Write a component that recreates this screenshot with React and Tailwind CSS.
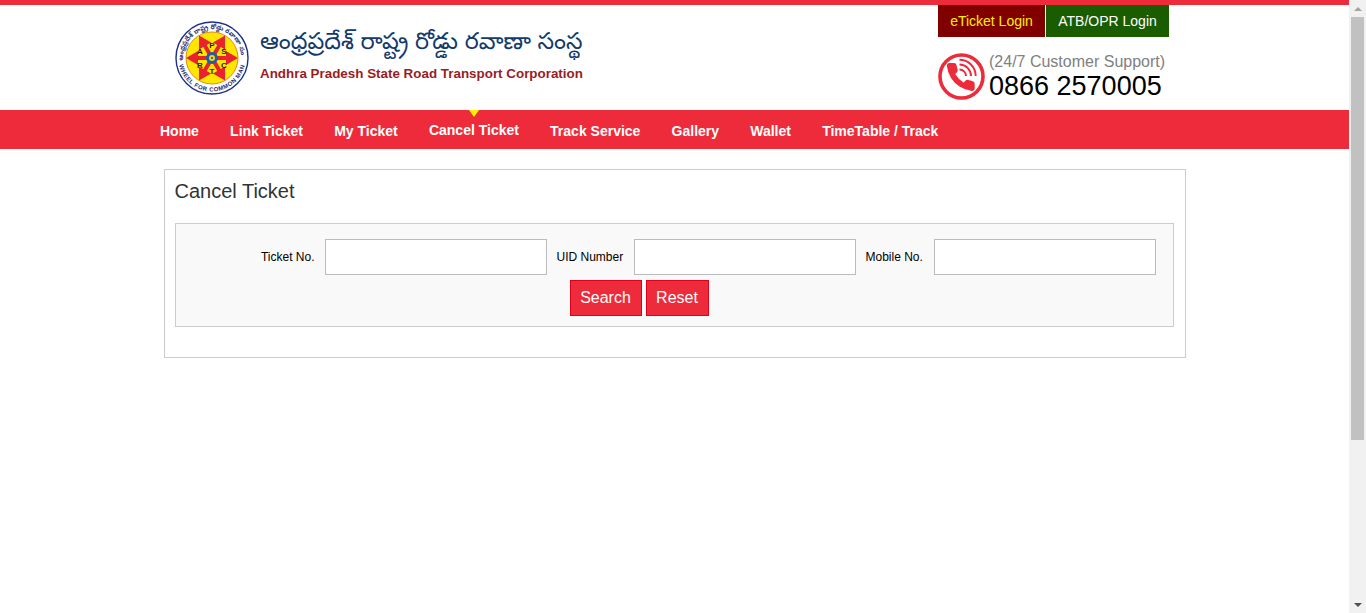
const NAV_ITEMS = ['Home', 'Link Ticket', 'My Ticket', 'Cancel Ticket', 'Track Service', 'Gallery', 'Wallet', 'TimeTable / Track'];
const SPOKES = [0, 60, 120, 180, 240, 300];
const LETTERS = [
  { ch: 'A', x: 25, y: 31 },
  { ch: 'P', x: 37, y: 25.500 },
  { ch: 'S', x: 49, y: 31 },
  { ch: 'R', x: 25, y: 45 },
  { ch: 'T', x: 37, y: 51 },
  { ch: 'C', x: 49, y: 45 },
];

function Logo() {
  return (
    <svg width="74" height="76" viewBox="0 0 74 76" className="shrink-0">
      <defs>
        <path id="ringTop" d="M8 38a29 29 0 0 1 58 0" />
        <path id="ringBottom" d="M3.500 38a33.500 33.500 0 0 0 67 0" />
      </defs>
      <circle cx="37" cy="38" r="36" fill="#fff" stroke="#1c2f86" strokeWidth="1.400" />
      <text fontSize="6.500" fontWeight="700" fill="#23307a" fontFamily="'Noto Sans Telugu', 'Noto Sans', sans-serif" textAnchor="middle">
        <textPath href="#ringTop" startOffset="50%">ఆంధ్రప్రదేశ్ రాష్ట్ర రోడ్డు రవాణా సంస్థ</textPath>
      </text>
      <text fontSize="6" fontWeight="700" fill="#23307a" fontFamily="'Liberation Sans', sans-serif" textAnchor="middle" letterSpacing="0.500">
        <textPath href="#ringBottom" startOffset="50%">WHEEL FOR COMMON MAN</textPath>
      </text>
      <circle cx="37" cy="38" r="26" fill="#ffe600" stroke="#e58a12" strokeWidth="1" />
      {SPOKES.map((deg) => (
        <polygon
          key={deg}
          points="37,36 51,36 51,31 63,38 51,45 51,40 37,40"
          fill="#e8232e"
          transform={`rotate(${deg} 37 38)`}
        />
      ))}
      {LETTERS.map((l) => (
        <text key={l.ch} x={l.x} y={l.y} fontSize="8" fontWeight="700" textAnchor="middle" dominantBaseline="central" fill="#2a1a10" fontFamily="'Liberation Sans', sans-serif">
          {l.ch}
        </text>
      ))}
      <circle cx="37" cy="38" r="6" fill="#1b5fae" />
      <circle cx="37" cy="38" r="3" fill="#ffd400" />
      <circle cx="37" cy="38" r="1" fill="#1d3a7a" />
    </svg>
  );
}

function PhoneBadge() {
  return (
    <svg width="47" height="47" viewBox="0 0 47 47" className="shrink-0">
      <circle cx="23.500" cy="23.500" r="21.500" fill="none" stroke="#ee2b3a" strokeWidth="3.600" />
      <g transform="translate(5.900 7.200) scale(1.400)">
        <path
          d="M22 16.920v3a2 2 0 0 1-2.180 2 19.790 19.790 0 0 1-8.630-3.070 19.500 19.500 0 0 1-6-6 19.790 19.790 0 0 1-3.070-8.670A2 2 0 0 1 4.110 2h3a2 2 0 0 1 2 1.720 12.840 12.840 0 0 0 .7 2.810 2 2 0 0 1-.45 2.110L8.090 9.910a16 16 0 0 0 6 6l1.270-1.270a2 2 0 0 1 2.110-.45 12.840 12.840 0 0 0 2.810.7A2 2 0 0 1 22 16.920z"
          fill="#ee2b3a"
        />
      </g>
      <path d="M21.500 16.500a6.500 6.500 0 0 1 6.500 6.500" fill="none" stroke="#ee2b3a" strokeWidth="2" />
      <path d="M21.500 11.500a11.500 11.500 0 0 1 11.500 11.500" fill="none" stroke="#ee2b3a" strokeWidth="2" />
      <path d="M21.500 6.800a16.200 16.200 0 0 1 16.200 16.200" fill="none" stroke="#ee2b3a" strokeWidth="2" />
    </svg>
  );
}

function Field({ label, labelClass }) {
  return (
    <>
      <label className={`text-xs text-black ${labelClass}`}>{label}</label>
      <input type="text" className="h-9 w-[222px] shrink-0 border border-[#bbbbbb] bg-white" />
    </>
  );
}

function Scrollbar() {
  return (
    <div className="flex h-full w-[17px] shrink-0 flex-col items-center bg-[#f1f1f1]">
      <div className="flex h-[17px] w-full items-center justify-center">
        <div className="h-0 w-0 border-x-[4px] border-b-[4px] border-x-transparent border-b-[#a3a3a3]" />
      </div>
      <div className="h-[423px] w-[13px] bg-[#c1c1c1]" />
      <div className="mt-auto flex h-[17px] w-full items-center justify-center">
        <div className="h-0 w-0 border-x-[4px] border-t-[4px] border-x-transparent border-t-[#505050]" />
      </div>
    </div>
  );
}

export default function App() {
  return (
    <div className="flex h-screen overflow-hidden bg-white font-['Liberation_Sans',Arial,sans-serif]">
      <div className="min-w-0 flex-1">
        <header className="flex h-[110px] border-t-[5px] border-[#ee2b3a]">
          <div className="flex w-[938px] shrink-0 items-start pl-[175px] pt-[15px]">
            <Logo />
            <div className="ml-[11px]">
              <div className="mt-[7px] h-[35px] whitespace-nowrap font-['Noto_Sans_Telugu','Noto_Sans',sans-serif] text-[23.600px] leading-[35px] text-[#123a6b]">
                ఆంధ్రప్రదేశ్ రాష్ట్ర రోడ్డు రవాణా సంస్థ
              </div>
              <div className="mt-[3px] whitespace-nowrap text-[13.400px] leading-[18px] font-bold text-[#9b1c1f]">
                Andhra Pradesh State Road Transport Corporation
              </div>
            </div>
          </div>
          <div className="w-[231px] shrink-0">
            <div className="flex gap-px text-sm leading-8">
              <a className="h-8 w-[107px] bg-[#800000] text-center text-[#ffef00]">eTicket Login</a>
              <a className="h-8 w-[123px] bg-[#1a5c00] text-center text-white">ATB/OPR Login</a>
            </div>
            <div className="mt-4 flex">
              <PhoneBadge />
              <div className="ml-1 pt-px">
                <div className="text-base leading-4 text-[#808080]">(24/7 Customer Support)</div>
                <div className="text-[27px] leading-[33px] text-black">0866 2570005</div>
              </div>
            </div>
          </div>
        </header>

        <nav className="flex h-[39px] bg-[#ee2b3a] pl-[144.400px]">
          {NAV_ITEMS.map((item) =>
            item === 'Cancel Ticket' ? (
              <a key={item} className="relative px-[15.600px] text-sm leading-[40px] font-bold text-white">
                <span className="absolute top-0 left-1/2 h-0 w-0 -translate-x-1/2 border-x-[5px] border-t-[7px] border-x-transparent border-t-[#ffef00]" />
                {item}
              </a>
            ) : (
              <a key={item} className="px-[15.600px] text-sm leading-[42px] font-bold text-white">
                {item}
              </a>
            )
          )}
        </nav>

        <main className="mx-auto mt-5 h-[189px] w-[1022px] border border-[#cccccc] px-[10px] pt-[10px]">
          <h2 className="text-xl leading-[22px] text-[#333333]">Cancel Ticket</h2>
          <div className="mt-[21px] h-[104px] w-[999px] border border-[#cccccc] bg-[#f9f9f9] pt-[15px]">
            <div className="flex items-center">
              <Field label="Ticket No." labelClass="w-[139px] mr-[10px] text-right" />
              <Field label="UID Number" labelClass="ml-[10px] mr-[10px] w-[67px]" />
              <Field label="Mobile No." labelClass="ml-[10px] mr-[10px] w-[58px]" />
            </div>
            <div className="mt-[5px] flex gap-1 pl-[394px]">
              <button className="h-9 w-[72px] border border-[#e0001a] bg-[#ee2b3a] text-base text-white">Search</button>
              <button className="h-9 w-[63px] border border-[#e0001a] bg-[#ee2b3a] text-base text-white">Reset</button>
            </div>
          </div>
        </main>
      </div>
      <Scrollbar />
    </div>
  );
}
